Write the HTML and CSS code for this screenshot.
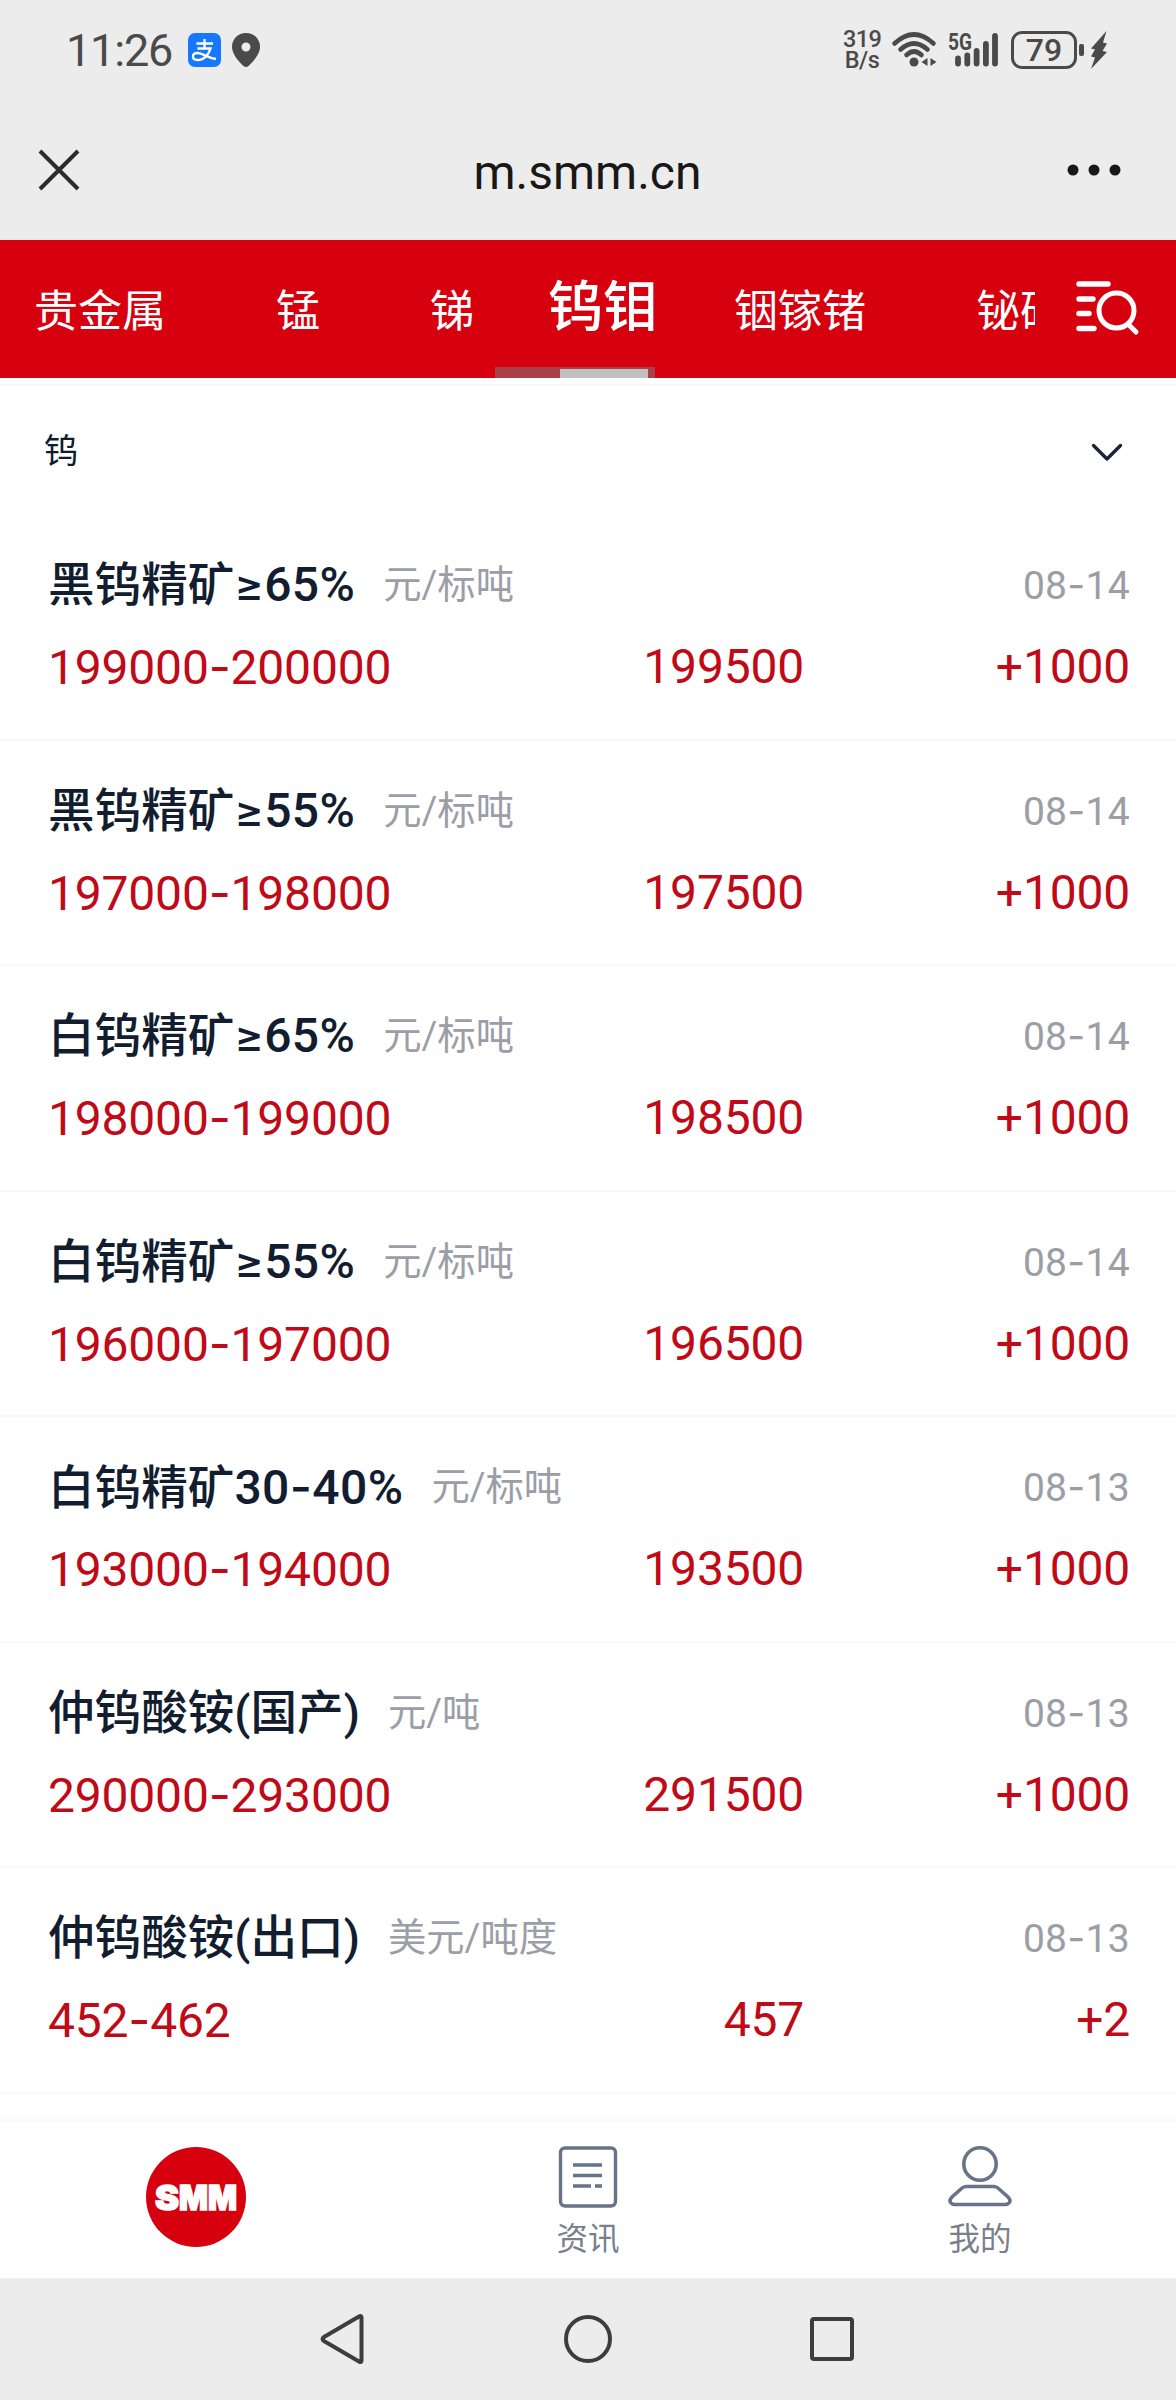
FILE: index.html
```html
<!DOCTYPE html>
<html lang="zh-CN">
<head>
    <meta charset="UTF-8">
    <title>m.smm.cn</title>
    <link rel="stylesheet" href="styles.css">
</head>

<body>
<div class="phone">

    <div class="status-bar">
        <span class="time">11:26</span>
        <svg class="pay-icon" width="33" height="34" viewBox="0 0 33 34">
            <rect width="33" height="34" rx="7" fill="#1677ff"/>
            <path d="M8.500 10.500H25M16.500 6V15M9.500 15.500H22.500C21 21 16.500 27 9.500 27C3.500 27 3.500 20 9.500 20C15 20 19 25 28 26" fill="none" stroke="#fff" stroke-width="2.300"/>
        </svg>
        <svg class="pin-icon" width="28" height="34" viewBox="0 0 28 34">
            <path fill-rule="evenodd" d="M14 0C22 0 28 6 28 14C28 21 21 29 16.500 33Q14 35 11.500 33C7 29 0 21 0 14C0 6 6 0 14 0ZM14 9.500A4.500 4.500 0 1 0 14 18.500A4.500 4.500 0 1 0 14 9.500Z" fill="#4a4a4a"/>
        </svg>
        <div class="speed">
            <span>319</span>
            <span>B/s</span>
        </div>
        <svg class="wifi-icon" width="45" height="36" viewBox="0 0 45 36">
            <g fill="none" stroke="#4a4a4a" stroke-width="4.600" stroke-linecap="round">
                <path d="M2.500 11.500Q22 -6.500 41.500 11.500"/>
                <path d="M8.500 17.500Q22 5.500 35.500 17.500"/>
                <path d="M14.500 23Q22 16 29.500 23"/>
            </g>
            <circle cx="22" cy="30" r="4.500" fill="#4a4a4a"/>
            <path d="M35.500 26V34L29.500 30ZM38.500 26V34L44.500 30Z" fill="#4a4a4a"/>
        </svg>
        <svg class="signal-icon" width="52" height="36" viewBox="0 0 52 36">
            <text class="signal-text" x="0" y="17.500" textLength="24" lengthAdjust="spacingAndGlyphs">5G</text>
            <g stroke="#4a4a4a" stroke-width="5.800" stroke-linecap="round">
                <path d="M10 26.500V31.500M19.300 23.500V31.500M28.600 19V31.500M37.900 12V31.500M47 4V31.500"/>
            </g>
        </svg>
        <div class="battery">79</div>
        <span class="battery-head"></span>
        <svg class="bolt-icon" width="18" height="38" viewBox="0 0 18 38">
            <path d="M16.500 0L1 17.500L5 18.500L1 25.500L5 26.500L1 38L17 21L12.500 20L17 12.500L13 11.500Z" fill="#4a4a4a"/>
        </svg>
    </div>

    <div class="title-bar">
        <svg width="42" height="42" viewBox="0 0 42 42">
            <path d="M2 2L40 40M40 2L2 40" stroke="#2b2b2b" stroke-width="4"/>
        </svg>
        <span class="title">m.smm.cn</span>
        <svg width="54" height="12" viewBox="0 0 54 12">
            <circle cx="6" cy="6" r="5.500" fill="#181818"/>
            <circle cx="27" cy="6" r="5.500" fill="#181818"/>
            <circle cx="48" cy="6" r="5.500" fill="#181818"/>
        </svg>
    </div>

    <div class="tabs">
        <div class="tab-scroll">
            <span class="tab">贵金属</span>
            <span class="tab">锰</span>
            <span class="tab">锑</span>
            <span class="tab active">钨钼</span>
            <span class="tab">铟镓锗</span>
            <span class="tab">铋研</span>
        </div>
        <svg class="search-icon" width="64" height="56" viewBox="0 0 64 56">
            <g fill="none" stroke="#fff" stroke-linecap="round">
                <path d="M3 4H32M3 19H17M3 33.500H13M3 48.500H18" stroke-width="5.400"/>
                <ellipse cx="40.500" cy="30.500" rx="17.500" ry="17.500" stroke-width="5"/>
                <path d="M52.500 44.500L60 52" stroke-width="5"/>
            </g>
        </svg>
        <div class="scroll-track">
            <div class="scroll-thumb"></div>
        </div>
    </div>

    <div class="group">
        <span>钨</span>
        <svg width="32" height="20" viewBox="0 0 32 20">
            <path d="M2.500 2.500L16 16L29.500 2.500" fill="none" stroke="#1b2538" stroke-width="3.400" stroke-linecap="round" stroke-linejoin="round"/>
        </svg>
    </div>

    <div class="list">
        <div class="item">
            <div class="line">
                <span class="name">黑钨精矿<b><em>≥</em>65%</b></span>
                <span class="unit">元/标吨</span>
                <span class="date">08<i>-</i>14</span>
            </div>
            <div class="prices">
                <span>199000<i>-</i>200000</span>
                <span>199500</span>
                <span>+1000</span>
            </div>
        </div>
        <div class="item">
            <div class="line">
                <span class="name">黑钨精矿<b><em>≥</em>55%</b></span>
                <span class="unit">元/标吨</span>
                <span class="date">08<i>-</i>14</span>
            </div>
            <div class="prices">
                <span>197000<i>-</i>198000</span>
                <span>197500</span>
                <span>+1000</span>
            </div>
        </div>
        <div class="item">
            <div class="line">
                <span class="name">白钨精矿<b><em>≥</em>65%</b></span>
                <span class="unit">元/标吨</span>
                <span class="date">08<i>-</i>14</span>
            </div>
            <div class="prices">
                <span>198000<i>-</i>199000</span>
                <span>198500</span>
                <span>+1000</span>
            </div>
        </div>
        <div class="item">
            <div class="line">
                <span class="name">白钨精矿<b><em>≥</em>55%</b></span>
                <span class="unit">元/标吨</span>
                <span class="date">08<i>-</i>14</span>
            </div>
            <div class="prices">
                <span>196000<i>-</i>197000</span>
                <span>196500</span>
                <span>+1000</span>
            </div>
        </div>
        <div class="item">
            <div class="line">
                <span class="name">白钨精矿<b>30<i>-</i>40%</b></span>
                <span class="unit">元/标吨</span>
                <span class="date">08<i>-</i>13</span>
            </div>
            <div class="prices">
                <span>193000<i>-</i>194000</span>
                <span>193500</span>
                <span>+1000</span>
            </div>
        </div>
        <div class="item">
            <div class="line">
                <span class="name">仲钨酸铵(国产)</span>
                <span class="unit">元/吨</span>
                <span class="date">08<i>-</i>13</span>
            </div>
            <div class="prices">
                <span>290000<i>-</i>293000</span>
                <span>291500</span>
                <span>+1000</span>
            </div>
        </div>
        <div class="item">
            <div class="line">
                <span class="name">仲钨酸铵(出口)</span>
                <span class="unit">美元/吨度</span>
                <span class="date">08<i>-</i>13</span>
            </div>
            <div class="prices">
                <span>452<i>-</i>462</span>
                <span>457</span>
                <span>+2</span>
            </div>
        </div>
    </div>

    <div class="bottom-nav">
        <div class="nav-item">
            <svg class="logo" width="102" height="102" viewBox="0 0 102 102">
                <circle cx="51" cy="51" r="50" fill="#d7000f"/>
                <text class="logo-text" y="63.500"><tspan x="10" textLength="24" lengthAdjust="spacingAndGlyphs">S</tspan><tspan x="34" textLength="58" lengthAdjust="spacingAndGlyphs">MM</tspan></text>
            </svg>
        </div>
        <div class="nav-item">
            <svg width="64" height="64" viewBox="0 0 64 64" fill="none" stroke="#667388">
                <rect x="4.500" y="3" width="55" height="58" rx="4.500" stroke-width="3.400"/>
                <path d="M17 20H46M17 30.500H46M17 41H35M39 41H46" stroke-width="3.600"/>
            </svg>
            <span>资讯</span>
        </div>
        <div class="nav-item">
            <svg width="64" height="64" viewBox="0 0 64 64" fill="none" stroke="#667388" stroke-width="3.600">
                <circle cx="32" cy="19" r="16.200"/>
                <path d="M18 41.500H46Q48.500 41.500 50.500 43.500L60 52Q63 55 61.500 57.500Q60 59.500 57 59.500H7Q4 59.500 2.500 57.500Q1 55 4 52L13.500 43.500Q15.500 41.500 18 41.500Z"/>
            </svg>
            <span>我的</span>
        </div>
    </div>

    <div class="system-nav">
        <svg width="50" height="52" viewBox="0 0 50 52">
            <path d="M42.500 4.500V47.500Q42.500 50 40 48.500L5 28Q2 26 5 24L40 3.500Q42.500 2 42.500 4.500Z" fill="none" stroke="#3d3d3d" stroke-width="4"/>
        </svg>
        <svg width="50" height="52" viewBox="0 0 50 52">
            <circle cx="25" cy="26" r="22" fill="none" stroke="#3d3d3d" stroke-width="4"/>
        </svg>
        <svg width="50" height="52" viewBox="0 0 50 52">
            <rect x="5" y="6" width="40" height="40" rx="2" fill="none" stroke="#3d3d3d" stroke-width="4"/>
        </svg>
    </div>

</div>
</body>
</html>
```

FILE: styles.css
```css
body {
    margin: 0;
    background-color: #fff;
    font-family: Roboto, "Noto Sans CJK SC", sans-serif;
}

svg {
    display: block;
    flex-shrink: 0;
    overflow: visible;
}

.phone {
    width: 1176px;
    height: 2400px;
    overflow: hidden;
    display: flex;
    flex-direction: column;
}

/* status bar */
.status-bar {
    height: 100px;
    background-color: #ececec;
    display: flex;
    align-items: center;
    padding: 0 68px 0 66px;
    box-sizing: border-box;
    color: #4a4a4a;
}

.time {
    font-size: 45px;
    width: 122px;
    letter-spacing: -1.2px;
}

.pin-icon {
    margin-left: 11px;
}

.speed {
    margin-left: auto;
    width: 38px;
    display: flex;
    flex-direction: column;
    text-align: center;
    font-size: 23.5px;
    line-height: 21px;
    letter-spacing: -0.6px;
    font-weight: 500;
}

.wifi-icon {
    margin-left: 11px;
}

.signal-icon {
    margin-left: 11px;
}

.signal-text {
    font-size: 23px;
    font-weight: 700;
    fill: #4a4a4a;
}

.battery {
    width: 66px;
    height: 38px;
    margin-left: 11px;
    box-sizing: border-box;
    border: 3px solid #4a4a4a;
    border-radius: 11px;
    font-size: 32px;
    line-height: 32px;
    font-weight: 500;
    text-align: center;
}

.battery-head {
    width: 5px;
    height: 12px;
    margin: 0 6px 0 2px;
    border-radius: 2px;
    background-color: #4a4a4a;
}

/* browser title */
.title-bar {
    height: 140px;
    background-color: #ececec;
    display: flex;
    align-items: center;
    justify-content: space-between;
    padding: 0 55px 0 38px;
    box-sizing: border-box;
}

.title {
    margin-left: 28px;
    padding-top: 4px;
    font-size: 48px;
    color: #181818;
}

/* metal tabs */
.tabs {
    position: relative;
    height: 138px;
    background-color: #d7000f;
    display: flex;
}

.tab-scroll {
    width: 1035px;
    overflow: hidden;
    display: flex;
    white-space: nowrap;
}

.tab {
    flex-shrink: 0;
    margin-left: 110px;
    font-size: 44px;
    line-height: 145px;
    color: #fff;
}

.tab:first-child {
    margin-left: 34px;
}

.tab.active {
    margin-left: 74px;
    font-size: 55px;
    line-height: 134px;
    font-weight: 500;
}

.tab.active + .tab {
    margin-left: 76px;
}

.search-icon {
    margin: 40px 0 0 41px;
}

.scroll-track {
    position: absolute;
    left: 495px;
    bottom: 0;
    width: 160px;
    height: 11px;
    background-color: #a94048;
}

.scroll-thumb {
    width: 88px;
    height: 9px;
    margin: 2px 0 0 65px;
    background-color: #bfbfbf;
}

/* group header */
.group {
    height: 137px;
    margin-top: 6px;
    border-top: 2px solid #f6f9fa;
    box-sizing: border-box;
    display: flex;
    align-items: center;
    justify-content: space-between;
    padding: 0 53px 11px 44px;
    font-size: 34px;
    color: #0f1c30;
}

.group svg {
    margin-top: 10px;
}

/* price list */
.list {
    height: 1600px;
    margin-top: -6px;
}

.item {
    height: 225.5px;
    padding: 35px 46px 0 48px;
    box-sizing: border-box;
    border-bottom: 2px solid #f5f7fb;
}

.line {
    height: 70px;
    line-height: 70px;
    display: flex;
}

.name {
    font-size: 46.6px;
    font-weight: 500;
    color: #121d30;
}

.name b {
    font-size: 48px;
    font-weight: 500;
    letter-spacing: 0.4px;
}

.name em {
    font-family: Inter, sans-serif;
    font-size: 44px;
    font-style: normal;
}

.unit {
    margin-left: 28px;
    font-size: 38.3px;
    color: #9b9ea6;
}

.date {
    margin-left: auto;
    font-size: 39px;
    letter-spacing: 0.3px;
    color: #9b9ea6;
}

.prices {
    display: grid;
    grid-template-columns: 400px 356px 326px;
    height: 94px;
    line-height: 94px;
    font-size: 48px;
    letter-spacing: -0.2px;
    color: #c00a17;
}

.prices span {
    text-align: right;
}

.prices span:first-child {
    text-align: left;
}

/* wide dash between the figures */
.item i {
    font-family: Inter, sans-serif;
    font-style: normal;
}

/* bottom menu */
.bottom-nav {
    flex-shrink: 0;
    height: 156px;
    margin-top: auto;
    background-color: #fff;
    box-shadow: 0 0 12px rgba(0, 0, 0, 0.06);
    display: flex;
}

.nav-item {
    width: 392px;
    padding-top: 23px;
    box-sizing: border-box;
    display: flex;
    flex-direction: column;
    align-items: center;
    font-size: 31.5px;
    line-height: 62px;
    color: #7b7f8c;
}

.logo {
    margin-top: 1px;
}

.logo-text {
    font-family: Inter, sans-serif;
    font-size: 34px;
    font-weight: 900;
    fill: #fff;
    stroke: #fff;
    stroke-width: 1.5px;
}

/* android buttons */
.system-nav {
    flex-shrink: 0;
    height: 122px;
    background-color: #ececec;
    display: flex;
    align-items: center;
    justify-content: center;
    gap: 194px;
}
```
